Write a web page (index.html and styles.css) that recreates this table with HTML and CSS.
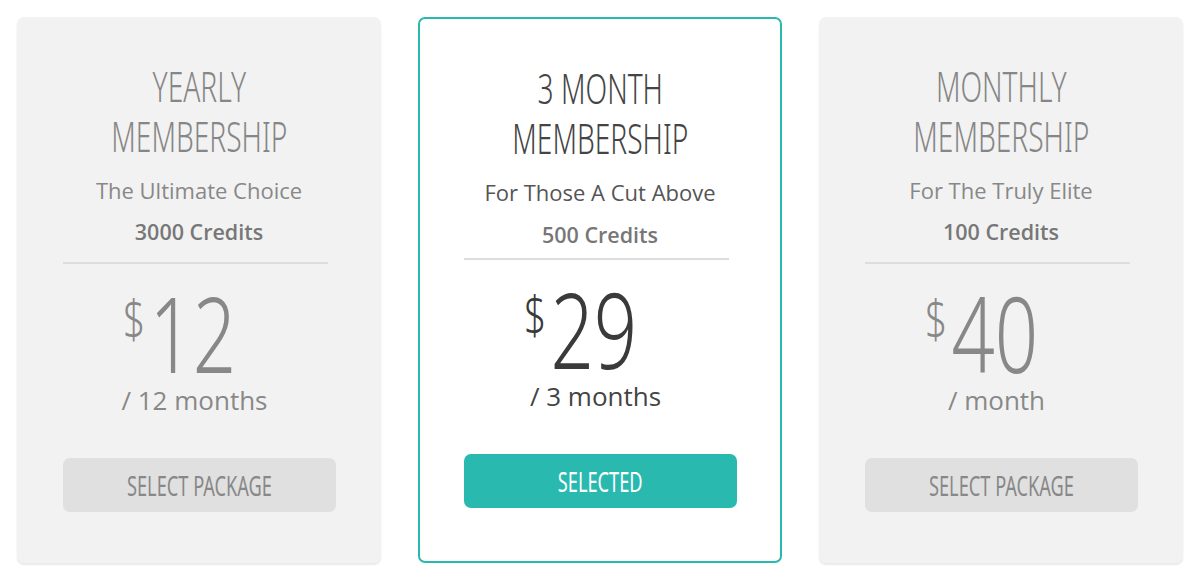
FILE: index.html
```html
<!DOCTYPE html>
<html lang="en">
<head>
<meta charset="utf-8">
<title>Membership Plans</title>
<link rel="stylesheet" href="styles.css">
</head>
<body>
<main class="plans">
  <article class="plan">
    <div class="plan-body">
      <h2 class="plan-title"><span class="cond cond--title">YEARLY<br>MEMBERSHIP</span></h2>
      <p class="plan-tagline">The Ultimate Choice</p>
      <p class="plan-credits">3000 Credits</p>
      <hr class="plan-rule">
      <div class="plan-price"><span class="price-group"><span class="plan-cur">$</span><span class="plan-amt">12</span></span></div>
      <p class="plan-period">/ 12 months</p>
      <button class="plan-btn" type="button"><span class="cond cond--btn">SELECT PACKAGE</span></button>
    </div>
  </article>
  <article class="plan plan--selected">
    <div class="plan-body">
      <h2 class="plan-title"><span class="cond cond--title">3 MONTH<br>MEMBERSHIP</span></h2>
      <p class="plan-tagline">For Those A Cut Above</p>
      <p class="plan-credits">500 Credits</p>
      <hr class="plan-rule">
      <div class="plan-price"><span class="price-group"><span class="plan-cur">$</span><span class="plan-amt">29</span></span></div>
      <p class="plan-period">/ 3 months</p>
      <button class="plan-btn" type="button"><span class="cond cond--btn">SELECTED</span></button>
    </div>
  </article>
  <article class="plan">
    <div class="plan-body">
      <h2 class="plan-title"><span class="cond cond--title">MONTHLY<br>MEMBERSHIP</span></h2>
      <p class="plan-tagline">For The Truly Elite</p>
      <p class="plan-credits">100 Credits</p>
      <hr class="plan-rule">
      <div class="plan-price"><span class="price-group"><span class="plan-cur">$</span><span class="plan-amt">40</span></span></div>
      <p class="plan-period">/ month</p>
      <button class="plan-btn" type="button"><span class="cond cond--btn">SELECT PACKAGE</span></button>
    </div>
  </article>
</main>
</body>
</html>
```
FILE: styles.css
```css
html, body {
  margin: 0;
  padding: 0;
  background: #ffffff;
}

body {
  font-family: "Open Sans", "Liberation Sans", sans-serif;
}

.plans {
  display: grid;
  grid-template-columns: repeat(3, 364px);
  gap: 37px;
  padding: 17px;
  align-items: start;
}

.plan {
  box-sizing: border-box;
  height: 546px;
  background: #f2f2f2;
  border-radius: 7px;
  box-shadow: 0 2px 2px rgba(0, 0, 0, 0.09);
  padding-top: 44px;
}

.plan--selected {
  background: #ffffff;
  border: 2px solid #2ab9af;
  box-shadow: none;
  padding-top: 44px;
}

.plan-body {
  width: 273px;
  margin: 0 auto;
  text-align: center;
}

/* condensed display face: Noto Sans compressed horizontally */
.plan-title,
.plan-cur,
.plan-amt,
.plan-btn {
  font-family: "Noto Sans", "Open Sans", sans-serif;
}

.cond {
  display: inline-block;
  white-space: nowrap;
  transform-origin: 50% 50%;
}

.cond--title { transform: scaleX(0.67); }
.cond--btn { transform: scaleX(0.65); }

.plan-title {
  margin: 0;
  font-size: 42px;
  line-height: 50px;
  font-weight: 300;
  color: #868686;
}

.plan-tagline {
  margin: 14px 0 0;
  font-size: 22px;
  line-height: 30px;
  color: #888888;
}

.plan-credits {
  margin: 12px 0 0;
  font-size: 21.5px;
  line-height: 30px;
  font-weight: 600;
  color: #777777;
}

.plan-rule {
  width: 265px;
  height: 2px;
  margin: 15px 0 0;
  border: 0;
  background: #dddddd;
}

.plan-price {
  display: flex;
  justify-content: center;
  margin-top: 29px;
  padding-right: 38px;
  color: #888888;
}

.price-group {
  display: inline-flex;
  align-items: flex-start;
  transform: scaleX(0.73);
  transform-origin: 50% 50%;
}

.plan-cur {
  font-size: 53px;
  line-height: 53px;
  font-weight: 300;
  margin-top: -1px;
  margin-right: 6px;
}

.plan-amt {
  font-size: 104px;
  line-height: 80px;
  font-weight: 300;
}

.plan-period {
  margin: 11px 0 0;
  padding-right: 9px;
  font-size: 26px;
  line-height: 32px;
  color: #888888;
}

.plan-btn {
  display: flex;
  align-items: center;
  justify-content: center;
  width: 273px;
  height: 54px;
  margin: 42px 0 0;
  padding: 0;
  border: 0;
  border-radius: 7px;
  background: #e0e0e0;
  color: #888888;
  font-size: 28px;
  line-height: 32px;
  font-weight: 400;
  cursor: pointer;
}

.plan--selected .plan-title { color: #444444; }
.plan--selected .plan-tagline { color: #555555; }
.plan--selected .plan-credits { margin-top: 13px; color: #777777; }
.plan--selected .plan-rule { margin-top: 8px; }
.plan--selected .plan-price { margin-top: 29px; color: #3a3a3a; }
.plan--selected .plan-period { color: #444444; }
.plan--selected .plan-btn {
  background: #2ab9af;
  color: #ffffff;
}
```
